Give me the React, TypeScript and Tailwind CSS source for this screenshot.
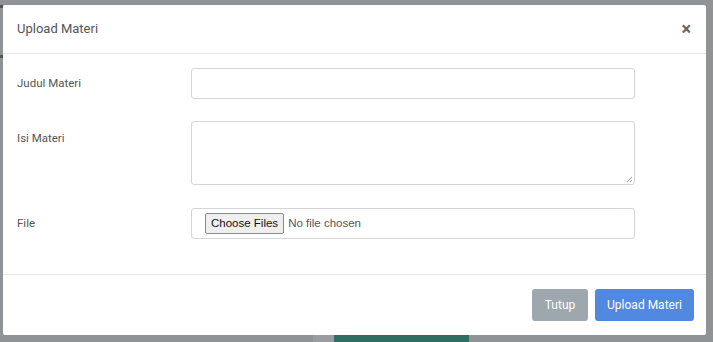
import React from "react";

export default function App() {
  return (
    <div className="relative w-[713px] h-[342px] overflow-hidden bg-[#909396]" style={{ fontFamily: "Roboto, 'Liberation Sans', sans-serif" }}>
      {/* background hints */}
      <div className="absolute left-[334px] top-[335px] w-[135px] h-[10px] bg-[#2f6e62]" />
      <div className="absolute left-[313px] top-[335px] w-[21px] h-[10px] bg-[#9a9da0]" />
      <div className="absolute left-0 top-[5px] w-[3px] h-[3px] bg-[#555]" />
      <div className="absolute left-0 top-[55px] w-[3px] h-[3px] bg-[#555]" />

      <div className="absolute left-[3px] top-[5px] w-[703px] h-[330px] bg-white rounded-[2px] flex flex-col">
        <div className="h-[49px] flex items-center justify-between pl-[14px] pr-[15px] border-b border-[#e5e5e5]">
          <span className="text-[13px] text-[#555]">Upload Materi</span>
          <span className="text-[18px] font-bold text-[#666] leading-none">×</span>
        </div>
        <div className="flex flex-col pt-[14px] pl-[14px] pr-[71px] h-[221px] border-b border-[#e5e5e5]">
          <div className="flex items-center h-[31px]">
            <label className="w-[174px] text-[11.5px] text-[#555]">Judul Materi</label>
            <div className="flex-1 h-[31px] border border-[#d3d6d9] rounded-[3px]" />
          </div>
          <div className="flex mt-[22px]">
            <label className="w-[174px] text-[11.5px] text-[#555] pt-[9px]">Isi Materi</label>
            <div className="relative flex-1 h-[64px] border border-[#d3d6d9] rounded-[3px]">
              <svg className="absolute right-[1px] bottom-[1px]" width="8" height="8" viewBox="0 0 8 8">
                <path d="M7 2 L2 7 M7 5 L5 7" stroke="#999" strokeWidth="1" />
              </svg>
            </div>
          </div>
          <div className="flex items-center mt-[23px]">
            <label className="w-[174px] text-[11.5px] text-[#555]">File</label>
            <div className="flex-1 h-[31px] border border-[#d3d6d9] rounded-[3px] flex items-center pl-[13px]">
              <span className="h-[21px] px-[5px] flex items-center bg-[#efefef] border border-[#8a8a8a] rounded-[2px] text-[11.5px] text-[#111]" style={{ fontFamily: "'Liberation Sans', Arial, sans-serif" }}>Choose Files</span>
              <span className="ml-[4px] text-[11.5px] text-[#555]" style={{ fontFamily: "'Liberation Sans', Arial, sans-serif" }}>No file chosen</span>
            </div>
          </div>
        </div>
        <div className="flex-1 flex items-start justify-end pt-[14px] pr-[12px] gap-[7px]">
          <button className="h-[32px] w-[56px] rounded-[3px] bg-[#9ea7ad] text-white text-[12px]">Tutup</button>
          <button className="h-[32px] w-[99px] rounded-[3px] bg-[#5189e0] text-white text-[12px]">Upload Materi</button>
        </div>
      </div>
    </div>
  );
}
